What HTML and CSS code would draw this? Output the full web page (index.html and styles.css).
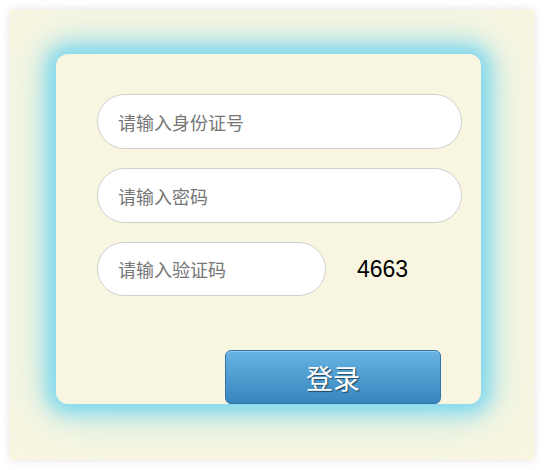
FILE: index.html
```html
<!DOCTYPE html>
<html>
<head>
<meta charset="utf-8">
<link rel="stylesheet" href="styles.css">
</head>
<body>
<div class="outer">
  <div class="card">
    <input class="field" type="text" placeholder="请输入身份证号">
    <input class="field" type="password" placeholder="请输入密码">
    <div class="code-row">
      <input class="field short" type="text" placeholder="请输入验证码">
      <span class="code">4663</span>
    </div>
    <div class="btn-row">
      <button class="btn">登录</button>
    </div>
  </div>
</div>
</body>
</html>
```
FILE: styles.css
```css
html, body {
  margin: 0;
  padding: 0;
  background: #ffffff;
}
body {
  padding: 10px;
  font-family: "Noto Sans CJK SC", "Liberation Sans", sans-serif;
}
.outer {
  width: 524px;
  height: 450px;
  box-sizing: border-box;
  background: #f8f6e1;
  box-shadow: 0 0 8px rgba(0, 0, 0, 0.12);
  padding: 44px 0 0 46px;
}
.card {
  width: 425px;
  height: 350px;
  box-sizing: border-box;
  background: #f8f6e1;
  border-radius: 12px;
  box-shadow: 0 0 18px 8px #80d8ee, 0 0 40px 12px rgba(128, 216, 238, 0.55);
  padding: 40px 0 0 41px;
  display: flex;
  flex-direction: column;
  gap: 19px;
  overflow: hidden;
}
.field {
  display: block;
  width: 365px;
  height: 55px;
  box-sizing: border-box;
  border: 1px solid #cfcfcf;
  border-radius: 28px;
  background: #fff;
  padding: 0 20px;
  font-family: "Noto Sans CJK SC", "Liberation Sans", sans-serif;
  font-size: 18px;
  color: #333;
  outline: none;
  margin: 0;
}
.field::placeholder {
  color: #767676;
}
.code-row {
  display: flex;
  align-items: center;
  gap: 31px;
}
.field.short {
  width: 229px;
  height: 54px;
}
.code {
  font-family: "Liberation Sans", Arial, sans-serif;
  font-size: 23px;
  color: #000;
}
.btn-row {
  padding: 35px 0 0 128px;
}
.btn {
  width: 216px;
  height: 54px;
  border: 1px solid #3174a8;
  border-radius: 6px;
  background: linear-gradient(to bottom, #68b4e4, #3685bd);
  color: #fff;
  font-family: "Noto Sans CJK SC", "Liberation Sans", sans-serif;
  font-size: 27px;
  text-shadow: 1px 1px 1px rgba(0, 0, 0, 0.55);
  box-shadow: inset 0 1px 0 rgba(255, 255, 255, 0.3);
  padding: 0;
  cursor: pointer;
}
```
